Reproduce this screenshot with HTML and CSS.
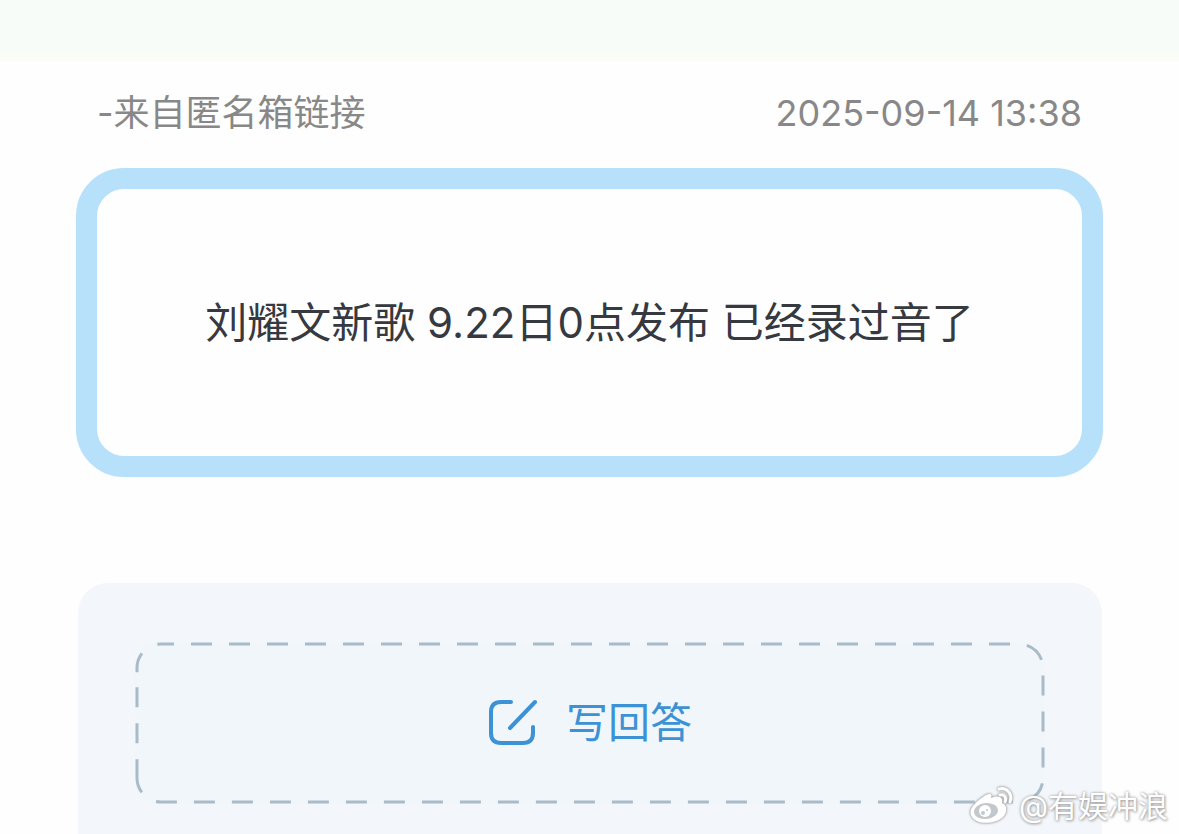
FILE: index.html
```html
<!DOCTYPE html>
<html lang="zh-CN">
<head>
<meta charset="utf-8">
<meta name="viewport" content="width=device-width, initial-scale=1">
<title>匿名箱</title>
<link rel="stylesheet" href="styles.css">
</head>
<body>
<div class="page">
  <header class="topbar"></header>
  <main class="content">
    <div class="meta">
      <span>-来自匿名箱链接</span>
      <time datetime="2025-09-14T13:38">2025-09-14 13:38</time>
    </div>
    <article class="question">
      <p class="question-text">刘耀文新歌 9.22日0点发布 已经录过音了</p>
    </article>
    <section class="panel">
      <button class="answer" type="button">
        <svg class="answer-outline" aria-hidden="true">
          <rect class="answer-dash" x="2" y="2" rx="24" ry="24"/>
        </svg>
        <svg class="answer-icon" viewBox="0 0 50 48" aria-hidden="true">
          <path d="M23 3H13Q3 3 3 13V34Q3 44 13 44H35Q45 44 45 34V28M22 29L47 3"/>
        </svg>
        <span>写回答</span>
      </button>
    </section>
  </main>
  <div class="watermark">
    <svg class="watermark-logo" viewBox="0 0 44 38" aria-hidden="true">
      <path class="logo-fill" d="M13 10C17 7 23 5 21 11C26 8 34 9 32 16C38 18 37 26 33 30C27 36 12 38 5 33C-2 28 0 21 5 17C7 14 10 12 13 10Z"/>
      <ellipse class="logo-eye" cx="16" cy="24" rx="12" ry="8" transform="rotate(-6 16 24)"/>
      <circle class="logo-fill" cx="15" cy="24" r="6"/>
      <circle class="logo-eye" cx="13" cy="26" r="2"/>
      <circle class="logo-eye" cx="17" cy="23" r="1"/>
      <path class="logo-line" d="M30 8C34 7 37 10 35 15M29 2C37 0 43 7 40 15"/>
    </svg>
    <span>@有娱冲浪</span>
  </div>
</div>
</body>
</html>
```
FILE: styles.css
```css
* {
  box-sizing: border-box;
}

body {
  margin: 0;
  background: #fefefe;
  font-family: Inter, "Noto Sans CJK SC", sans-serif;
}

.page {
  position: relative;
  display: flex;
  flex-direction: column;
  min-height: 100vh;
  overflow: hidden;
}

.topbar {
  height: 61px;
  background: linear-gradient(#f8fcf8 80%, #fafcf7);
}

.content {
  flex: 1;
  display: flex;
  flex-direction: column;
  padding: 26px 76px 0;
}

.meta {
  display: flex;
  justify-content: space-between;
  padding: 0 21px;
  margin-bottom: 29px;
  color: #888;
  font-size: 36px;
  line-height: 52px;
}

.question {
  border: 21px solid #b7e0fb;
  border-radius: 48px;
  padding: 104px 20px 103px;
  background: #fefefe;
  text-align: center;
}

.question-text {
  margin: 0;
  color: #36393f;
  font-size: 42px;
  line-height: 60px;
}

.panel {
  flex: 1;
  margin: 106px 1px 0 2px;
  padding: 59px 57px 30px;
  border-radius: 30px 30px 0 0;
  background: #f3f7fb;
}

.answer {
  position: relative;
  display: flex;
  align-items: center;
  justify-content: center;
  gap: 28px;
  width: 100%;
  padding: 51px 0;
  border: 0;
  background: #f1f6fb;
  color: #3d92d6;
  font: inherit;
  font-size: 42px;
  line-height: 60px;
  border-radius: 24px;
}

.answer-outline {
  position: absolute;
  inset: 0;
  width: 100%;
  height: 100%;
}

/* 23 dashes along the top, 5 down the right, 23 along the bottom, 5 up the left */
.answer-dash {
  width: calc(100% - 4px);
  height: calc(100% - 4px);
  fill: none;
  stroke: #a9bbc9;
  stroke-width: 3;
  stroke-dasharray:
    21 17 21 17 21 17 21 17 21 17 21 17 21 17 21 17 21 17 21 17 21 17 21 17
    21 17 21 17 21 17 21 17 21 17 21 17 21 17 21 17 21 17 21 17 21 17
    21 16 20 16 20 16 20 16 22 16
    21 17 21 17 21 17 21 17 21 17 21 17 21 17 21 17 21 17 21 17 21 17 21 17
    21 17 21 17 21 17 21 17 21 17 21 17 21 17 21 17 21 17 21 17 21 17
    34 16 20 16 20 15 20 18;
  stroke-dashoffset: 8;
}

.answer-icon {
  width: 50px;
  height: 48px;
  fill: none;
  stroke: currentColor;
  stroke-width: 4;
  stroke-linecap: round;
}

.watermark {
  position: absolute;
  right: 11px;
  bottom: 6px;
  display: flex;
  align-items: center;
  gap: 5px;
  color: #fff;
  font-size: 30px;
  line-height: 44px;
  text-shadow: 0 0 3px #999, 1px 1px 3px #aaa;
}

.watermark-logo {
  width: 44px;
  height: 38px;
  overflow: visible;
  filter: drop-shadow(0 0 1px #999) drop-shadow(0 0 1px #bbb);
}

.logo-fill {
  fill: #fff;
}

.logo-eye {
  fill: #c3c8cc;
}

.logo-line {
  fill: none;
  stroke: #fff;
  stroke-width: 3;
  stroke-linecap: round;
}
```
